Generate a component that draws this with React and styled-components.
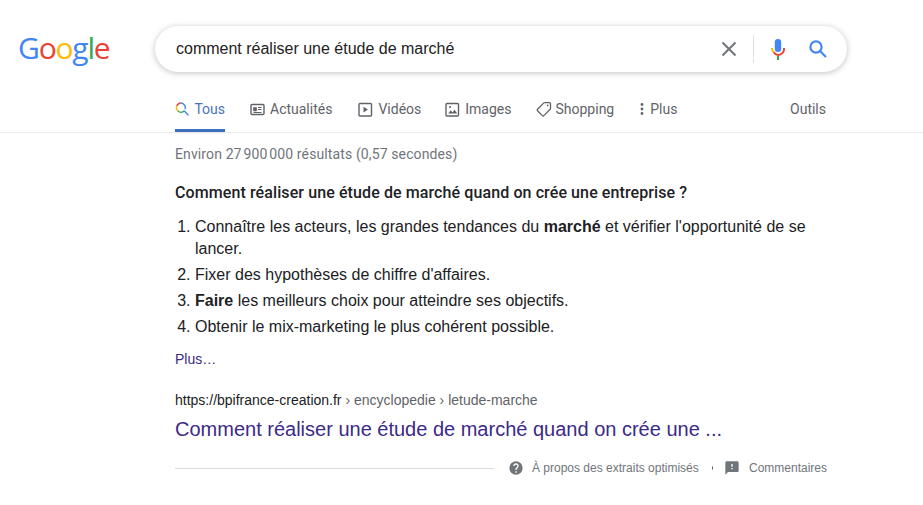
import React from "react";
import styled, { createGlobalStyle } from "styled-components";

const Global = createGlobalStyle`
  html, body { margin: 0; padding: 0; background: #fff; }
  body { font-family: "Liberation Sans", Arial, sans-serif; color: #202124; width: 923px; height: 505px; overflow: hidden; }
`;

const Header = styled.header`
  display: flex;
  align-items: center;
  height: 46px;
  padding: 26px 0 0 18px;
`;
const Logo = styled.div`
  width: 137px;
  font-family: "Open Sans", sans-serif;
  font-size: 30px;
  line-height: 46px;
  letter-spacing: -1.2px;
  font-weight: 500;
  position: relative;
  top: -1px;
`;
const L = styled.span`
  color: ${p => p.$c};
`;
const SearchBox = styled.div`
  width: 692px;
  height: 46px;
  box-sizing: border-box;
  border-radius: 23px;
  box-shadow: 0 1px 6px rgba(32,33,36,.28);
  display: flex;
  align-items: center;
  padding: 0 1px 0 21px;
`;
const Query = styled.div`
  flex: 1;
  font-size: 16px;
  color: #222;
`;
const IconSlot = styled.span`
  display: flex;
  align-items: center;
  justify-content: center;
  width: ${p => p.$w}px;
`;
const Divider = styled.span`
  width: 1px;
  height: 28px;
  background: #dfe1e5;
  margin: 0 12px;
`;
const Tabs = styled.nav`
  display: flex;
  align-items: stretch;
  height: 60px;
  padding-left: 175px;
  padding-right: 97px;
  border-bottom: 1px solid #ebebeb;
  font-family: Roboto, sans-serif;
  font-size: 14px;
  color: #5f6368;
`;
const Tab = styled.div`
  display: flex;
  align-items: center;
  gap: ${p => p.$gap ?? 5}px;
  margin-right: ${p => p.$mr ?? 24}px;
  width: ${p => (p.$active ? "50px" : "auto")};
  padding-top: 17px;
  box-sizing: border-box;
  color: ${p => (p.$active ? "#4a72b8" : "#5f6368")};
  border-bottom: 3px solid ${p => (p.$active ? "#3d6fc1" : "transparent")};
`;
const Spacer = styled.div`
  flex: 1;
`;
const Main = styled.main`
  padding: 13px 0 0 175px;
  width: 652px;
`;
const Stats = styled.div`
  font-family: Roboto, sans-serif;
  font-size: 14px;
  line-height: 16px;
  letter-spacing: 0.12px;
  color: #70757a;
`;
const Heading = styled.div`
  font-family: Roboto, sans-serif;
  font-size: 16px;
  font-weight: 500;
  line-height: 20px;
  letter-spacing: 0.1px;
  margin-top: 21px;
  color: #202124;
`;
const List = styled.ol`
  margin: 13px 0 0;
  padding: 0 0 0 20px;
  font-size: 16px;
  line-height: 22px;
  color: #202124;
`;
const Item = styled.li`
  margin-bottom: 4px;
`;
const More = styled.div`
  font-size: 14px;
  line-height: 18px;
  margin-top: 12px;
  color: #3c2a87;
`;
const Url = styled.div`
  font-size: 14px;
  line-height: 18px;
  margin-top: 23px;
  color: #5f6368;
`;
const Domain = styled.span`
  color: #202124;
`;
const Title = styled.div`
  font-size: 20px;
  line-height: 26px;
  margin-top: 7px;
  color: #3c2a87;
`;
const Footer = styled.div`
  display: flex;
  align-items: center;
  margin-top: 18px;
  font-size: 12px;
  color: #70757a;
  white-space: nowrap;
`;
const Rule = styled.div`
  width: 319px;
  height: 1px;
  background: #dadce0;
  margin-right: 14px;
  flex: none;
`;
const FootLink = styled.span`
  display: flex;
  align-items: center;
  gap: ${p => p.$gap}px;
`;
const AboutText = styled.span`
  margin-left: -1px;
`;
const Dot = styled.span`
  width: 4px;
  height: 4px;
  border-radius: 50%;
  background: #5f6368;
  margin: 0 11px 0 13px;
`;

const G = "#5f6368";

export default function App() {
  return (
    <>
      <Global />
      <Header>
        <Logo>
          <L $c="#4285f4">G</L><L $c="#ea4335">o</L><L $c="#fbbc05">o</L><L $c="#4285f4">g</L><L $c="#34a853">l</L><L $c="#ea4335">e</L>
        </Logo>
        <SearchBox>
          <Query>comment réaliser une étude de marché</Query>
          <IconSlot $w={24}>
            <svg width="24" height="24" viewBox="0 0 24 24" fill="none" stroke="#70757a" strokeWidth="2"><path d="M5.500 5.500l13 13M18.500 5.500l-13 13"/></svg>
          </IconSlot>
          <Divider />
          <IconSlot $w={24}>
            <svg width="24" height="24" viewBox="0 0 24 24">
              <path fill="#4285f4" d="M12 15a3.200 3.200 0 0 0 3.200-3.200V5.200a3.200 3.200 0 0 0-6.400 0v6.600A3.200 3.200 0 0 0 12 15z"/>
              <path fill="#34a853" d="M11 18.900h2V23h-2z"/>
              <path fill="#fbbc05" d="M7 11H5c0 1.900.8 3.600 2 4.900l1.500-1.400A5 5 0 0 1 7 11z"/>
              <path fill="#ea4335" d="M12 17a5 5 0 0 1-3.500-2.500L7 15.900A7 7 0 0 0 12 19a7 7 0 0 0 7-8h-2a5 5 0 0 1-5 6z"/>
            </svg>
          </IconSlot>
          <IconSlot $w={56}>
            <svg width="24" height="24" viewBox="0 0 24 24" fill="none" stroke="#4285f4" strokeWidth="2.200"><circle cx="10" cy="10" r="5.600"/><path d="M14.200 14.200L20 20"/></svg>
          </IconSlot>
        </SearchBox>
      </Header>
      <Tabs>
        <Tab $active $gap={5} $mr={25}>
          <svg width="16" height="16" viewBox="0 0 16 16" fill="none" strokeWidth="1.600">
            <path stroke="#ea4335" d="M2 4.500A5.200 5.200 0 0 1 6.500 1.300"/>
            <path stroke="#4285f4" d="M6.500 1.300a5.200 5.200 0 0 1 4.700 7"/>
            <path stroke="#fbbc05" d="M2 4.500a5.200 5.200 0 0 0 1.200 5.700"/>
            <path stroke="#34a853" d="M3.200 10.200a5.200 5.200 0 0 0 7.200-.2"/>
            <path stroke="#4285f4" d="M10 10l5 5"/>
          </svg>
          Tous
        </Tab>
        <Tab $mr={26}>
          <svg width="15" height="15" viewBox="0 0 15 15" fill="none" stroke={G} strokeWidth="1.400"><rect x="1" y="2.500" width="13" height="10" rx="1"/><path fill={G} d="M3.500 5.500h3v3.500h-3z" strokeWidth="0.600"/><path d="M8 5.500h3.500M8 7.500h3.500M3.500 10.500h8" strokeWidth="1"/></svg>
          Actualités
        </Tab>
        <Tab>
          <svg width="15" height="15" viewBox="0 0 15 15" fill="none" stroke={G} strokeWidth="1.400"><rect x="1" y="1.500" width="12.500" height="12.500" rx="1"/><path fill={G} stroke="none" d="M5.500 4.800v5.600l4.400-2.800z"/></svg>
          Vidéos
        </Tab>
        <Tab>
          <svg width="15" height="15" viewBox="0 0 15 15" fill="none" stroke={G} strokeWidth="1.400"><rect x="1" y="1.500" width="12.500" height="12.500" rx="1"/><path fill={G} stroke="none" d="M3.200 11.600l2.500-3.400 1.800 2.200 2-2.700 2.700 3.900z"/><circle cx="5" cy="5" r="1" fill={G} stroke="none"/></svg>
          Images
        </Tab>
        <Tab $gap={4}>
          <svg width="16" height="16" viewBox="0 0 16 16" fill="none" stroke={G} strokeWidth="1.300"><path d="M1.500 8.300l6.400-6.400c.2-.2.400-.3.700-.3h5c.5 0 .9.400.9.900v5c0 .3-.1.500-.3.700l-6.400 6.400c-.4.400-1 .4-1.400 0l-4.900-4.900c-.4-.4-.4-1 0-1.400z"/><circle cx="11.600" cy="4.400" r=".9" fill={G} stroke="none"/></svg>
          Shopping
        </Tab>
        <Tab $gap={4}>
          <svg width="8" height="14" viewBox="0 0 8 14" fill={G}><circle cx="4" cy="2.500" r="1.400"/><circle cx="4" cy="7" r="1.400"/><circle cx="4" cy="11.500" r="1.400"/></svg>
          Plus
        </Tab>
        <Spacer />
        <Tab $mr={0}>Outils</Tab>
      </Tabs>
      <Main>
        <Stats>Environ 27{"\u202f"}900{"\u202f"}000 résultats (0,57 secondes)</Stats>
        <Heading>Comment réaliser une étude de marché quand on crée une entreprise ?</Heading>
        <List>
          <Item>Connaître les acteurs, les grandes tendances du <b>marché</b> et vérifier l'opportunité de se lancer.</Item>
          <Item>Fixer des hypothèses de chiffre d'affaires.</Item>
          <Item><b>Faire</b> les meilleurs choix pour atteindre ses objectifs.</Item>
          <Item>Obtenir le mix-marketing le plus cohérent possible.</Item>
        </List>
        <More>Plus…</More>
        <Url><Domain>https://bpifrance-creation.fr</Domain> › encyclopedie › letude-marche</Url>
        <Title>Comment réaliser une étude de marché quand on crée une ...</Title>
        <Footer>
          <Rule />
          <FootLink $gap={9}>
            <svg width="16" height="16" viewBox="0 0 24 24" fill="#70757a"><path d="M12 2a10 10 0 1 0 0 20 10 10 0 0 0 0-20zm1 17h-2v-2h2v2zm2.100-7.700l-.9.900c-.8.700-1.200 1.300-1.200 2.800h-2v-.5c0-1.100.4-2.100 1.200-2.800l1.200-1.300c.4-.3.600-.8.600-1.400a2 2 0 0 0-4 0H8a4 4 0 0 1 8 0c0 .9-.4 1.700-.9 2.300z"/></svg>
            <AboutText>À propos des extraits optimisés</AboutText>
          </FootLink>
          <Dot />
          <FootLink $gap={9}>
            <svg width="16" height="16" viewBox="0 0 24 24" fill="#70757a"><path d="M20 2H4a2 2 0 0 0-2 2v18l4-4h14a2 2 0 0 0 2-2V4a2 2 0 0 0-2-2zm-7 12h-2v-2h2v2zm0-4h-2V6h2v4z"/></svg>
            Commentaires
          </FootLink>
        </Footer>
      </Main>
    </>
  );
}
